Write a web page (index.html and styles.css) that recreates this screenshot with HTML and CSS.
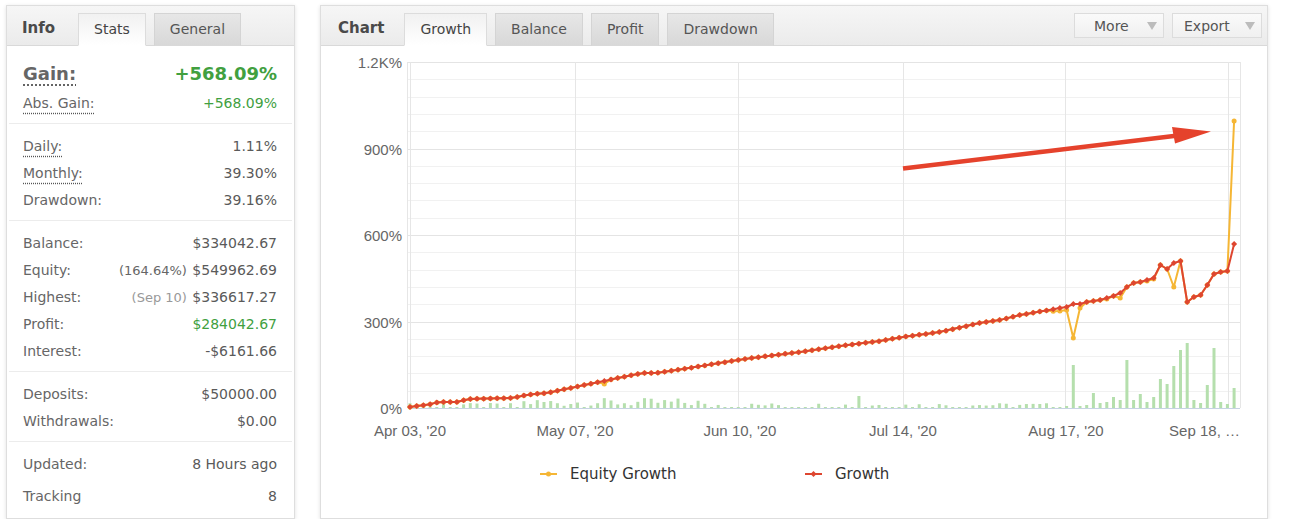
FILE: index.html
```html
<!DOCTYPE html>
<html lang="en">
<head>
    <meta charset="UTF-8">
    <meta name="viewport" content="width=device-width, initial-scale=1.0">
    <title>Account stats</title>
    <link rel="stylesheet" href="styles.css">
</head>
<body>

<div class="page">
    <section class="panel info">
        <div class="panel-head">
            <span class="head-title">Info</span>
            <div class="tabs">
                <span class="tab active">Stats</span>
                <span class="tab">General</span>
            </div>
        </div>

        <div class="stats">
            <div class="group first">
                <div class="row big"><span class="tip">Gain:</span><span class="good">+568.09%</span></div>
                <div class="row"><span class="tip">Abs. Gain:</span><span class="good">+568.09%</span></div>
            </div>
            <div class="group">
                <div class="row"><span class="tip">Daily:</span><span class="value">1.11%</span></div>
                <div class="row"><span class="tip">Monthly:</span><span class="value">39.30%</span></div>
                <div class="row"><span>Drawdown:</span><span class="value">39.16%</span></div>
            </div>
            <div class="group">
                <div class="row"><span>Balance:</span><span class="value">$334042.67</span></div>
                <div class="row"><span>Equity:</span><span class="value"><span class="note">(164.64%)</span> $549962.69</span></div>
                <div class="row"><span>Highest:</span><span class="value"><span class="note light">(Sep 10)</span> $336617.27</span></div>
                <div class="row"><span>Profit:</span><span class="good">$284042.67</span></div>
                <div class="row"><span>Interest:</span><span class="value">-$6161.66</span></div>
            </div>
            <div class="group">
                <div class="row"><span>Deposits:</span><span class="value">$50000.00</span></div>
                <div class="row"><span>Withdrawals:</span><span class="value">$0.00</span></div>
            </div>
            <div class="group last">
                <div class="row"><span>Updated:</span><span class="value">8 Hours ago</span></div>
                <div class="row tracking"><span>Tracking</span><span class="value">8</span></div>
            </div>
        </div>
    </section>

    <section class="panel chart">
        <div class="panel-head">
            <span class="head-title">Chart</span>
            <div class="tabs">
                <span class="tab active">Growth</span>
                <span class="tab">Balance</span>
                <span class="tab">Profit</span>
                <span class="tab">Drawdown</span>
            </div>
            <div class="tools">
                <span class="btn">More <i class="caret"></i></span>
                <span class="btn">Export <i class="caret"></i></span>
            </div>
        </div>

        <svg id="plot" class="plot" width="946" height="400" viewBox="321 46 946 400"></svg>

        <div class="legend">
            <span class="legend-item equity">
                <svg width="17" height="10" viewBox="0 0 17 10"><line x1="0" y1="5" x2="17" y2="5" stroke="#f5b635" stroke-width="2"/><circle cx="8.5" cy="5" r="2.5" fill="#f5b635"/></svg>
                Equity Growth
            </span>
            <span class="legend-item">
                <svg width="17" height="10" viewBox="0 0 17 10"><line x1="0" y1="5" x2="17" y2="5" stroke="#de4630" stroke-width="2"/><path d="M8.5 2 L11.5 5 L8.5 8 L5.5 5 Z" fill="#de4630"/></svg>
                Growth
            </span>
        </div>
    </section>
</div>

<script>
var NS = 'http://www.w3.org/2000/svg';
var svg = document.getElementById('plot');

// plot area in page pixels
var LEFT = 410, RIGHT = 1240, TOP = 62, BASE = 408;
var K = (BASE - TOP) / 1200;
var X0 = 410, DX = 6.7;

function add(tag, attrs) {
    var el = document.createElementNS(NS, tag);
    for (var k in attrs) el.setAttribute(k, attrs[k]);
    svg.appendChild(el);
    return el;
}

function label(x, y, text, anchor) {
    var t = add('text', { x: x, y: y, 'text-anchor': anchor, 'class': 'axis-label' });
    t.textContent = text;
}

// horizontal grid, every 60%
for (var v = 0; v <= 1200; v += 60) {
    var gy = Math.round(BASE - v * K) + 0.5;
    add('line', { x1: 408, x2: RIGHT, y1: gy, y2: gy, stroke: v % 300 === 0 ? '#e4e4e4' : '#f1f1f1', 'stroke-width': 1 });
}

// vertical grid
[407.5, 410.5, 575.5, 738.5, 903.5, 1065.5, 1228.5, 1240.5].forEach(function (gx) {
    add('line', { x1: gx, x2: gx, y1: TOP, y2: BASE, stroke: '#e6e6e6', 'stroke-width': 1 });
});

// y labels
[['0%', 0], ['300%', 300], ['600%', 600], ['900%', 900], ['1.2K%', 1200]].forEach(function (p) {
    label(402, BASE - p[1] * K + 6, p[0], 'end');
});

// x labels
[["Apr 03, '20", 410], ["May 07, '20", 575], ["Jun 10, '20", 740], ["Jul 14, '20", 903], ["Aug 17, '20", 1066]].forEach(function (p) {
    label(p[1], 436, p[0], 'middle');
});
label(1240, 436, 'Sep 18, \u2026', 'end');

// growth curve, traced in page pixels
var anchors = [[410,407],[432,404],[438,402],[459,402],[467,399],[513,398],[521,396],[534,394],[547,393],[575,387],
    [623,377],[642,373],[656,373],[677,370],[744,359],[760,357],[800,352],[840,346],[880,341],[903,337],
    [940,332],[980,323],[1000,320],[1020,315],[1066,307]];

function interp(x) {
    for (var i = 1; i < anchors.length; i++) {
        if (x <= anchors[i][0]) {
            var a = anchors[i - 1], b = anchors[i];
            return a[1] + (b[1] - a[1]) * (x - a[0]) / (b[0] - a[0]);
        }
    }
    return anchors[anchors.length - 1][1];
}

var red = [], yel = [];
for (var i = 0; i < 98; i++) red.push(interp(X0 + i * DX));
yel = red.slice();
yel[29] += 3; yel[96] += 2; yel[97] += 3;

red = red.concat([307,304,304,302,301,300,298,296,293,287,283,282,280,278,265,269,263,261,302,297,295,285,274,272,271,244]);
yel = yel.concat([310,338,308,302,301,300,299,296,298,287,283,282,281,279,265,269,287,261,302,297,295,285,274,272,271,121]);

// daily bars
function rnd(n) {
    var s = Math.sin(n * 12.9898) * 43758.5453;
    return s - Math.floor(s);
}
var bars = [];
for (var i = 0; i < 98; i++) {
    var x = X0 + i * DX, r = rnd(i + 1), h;
    if (x < 520) h = r < 0.5 ? 1 : 2 + r * 3;
    else if (x < 700) h = 1 + r * 9;
    else h = r < 0.35 ? 1 : 1 + r * 4;
    bars.push(h);
}
bars[67] = 12;
bars = bars.concat([2,43,2,3,15,5,6,11,8,48,8,14,6,11,29,24,42,58,65,8,5,23,60,6,4,20]);

bars.forEach(function (h, i) {
    add('rect', { x: X0 + i * DX - 1.5, y: BASE - h, width: 3, height: h, fill: '#b5dfad' });
});

add('line', { x1: 408, x2: RIGHT, y1: BASE + 0.5, y2: BASE + 0.5, stroke: '#c6d3e3', 'stroke-width': 1 });

function series(ys, color, diamond) {
    var pts = ys.map(function (y, i) { return (X0 + i * DX).toFixed(1) + ',' + y.toFixed(1); });
    add('polyline', { points: pts.join(' '), fill: 'none', stroke: color, 'stroke-width': 2, 'stroke-linejoin': 'round' });
    ys.forEach(function (y, i) {
        var x = X0 + i * DX;
        if (diamond) {
            add('path', { d: 'M' + x + ' ' + (y - 3) + ' L' + (x + 3) + ' ' + y + ' L' + x + ' ' + (y + 3) + ' L' + (x - 3) + ' ' + y + ' Z', fill: color });
        } else {
            add('circle', { cx: x, cy: y, r: 2.5, fill: color });
        }
    });
}
series(yel, '#f5b635', false);
series(red, '#de4630', true);

// annotation arrow
add('line', { x1: 903, y1: 168.5, x2: 1178, y2: 135.5, stroke: '#e5422c', 'stroke-width': 4.5 });
add('polygon', { points: '1172,127 1211,131.5 1175,143.5', fill: '#e5422c' });
</script>

</body>
</html>
```

FILE: styles.css
```css
body {
    margin: 0;
    background-color: #fff;
    font-family: "DejaVu Sans", Verdana, sans-serif;
    font-size: 14px;
    color: #666;
}
.page {
    display: flex;
    gap: 25px;
    padding: 5px 0 0 6px;
}
.panel {
    box-sizing: border-box;
    height: 514px;
    background-color: #fff;
    border: 1px solid #dedede;
    box-shadow: 0 1px 4px rgba(0,0,0,0.12);
}
.info {
    width: 289px;
}
.chart {
    width: 948px;
}
.panel-head {
    display: flex;
    align-items: flex-end;
    height: 39px;
    background: linear-gradient(#f6f6f6, #ebebeb);
    border-bottom: 1px solid #d9d9d9;
}
.head-title {
    align-self: center;
    margin: 5px 23px 0 15px;
    font-size: 15px;
    font-weight: bold;
    color: #4a4a4a;
}
.chart .head-title {
    margin-left: 17px;
    margin-right: 20px;
}
.tabs {
    display: flex;
    gap: 8px;
}
.tab {
    box-sizing: border-box;
    height: 33px;
    margin-bottom: -1px;
    padding: 0 15px;
    line-height: 31px;
    font-size: 14px;
    color: #555;
    background: linear-gradient(#e7e7e7, #d8d8d8);
    border: 1px solid #d4d4d4;
    border-bottom-color: #d9d9d9;
}
.tab.active {
    background: linear-gradient(#f1f1f1, #fff);
    border-color: #dcdcdc;
    border-bottom-color: #fff;
    color: #444;
}
.tools {
    display: flex;
    gap: 8px;
    margin-left: auto;
    margin-right: 5px;
    align-self: flex-start;
    margin-top: 7px;
}
.btn {
    box-sizing: border-box;
    display: flex;
    align-items: center;
    justify-content: space-between;
    width: 90px;
    height: 25px;
    padding: 0 6px 0 19px;
    font-size: 14px;
    color: #555;
    background: linear-gradient(#fafafa, #f0f0f0);
    border: 1px solid #dcdcdc;
}
.btn + .btn {
    padding-left: 11px;
}
.caret {
    width: 0;
    height: 0;
    border-left: 5px solid transparent;
    border-right: 5px solid transparent;
    border-top: 8px solid #bcbcbc;
}

/* stats list */
.stats {
    padding: 0 2px;
}
.group {
    padding: 8px 15px 7px 14px;
    border-bottom: 1px solid #ececec;
}
.group.first {
    padding-top: 12px;
}
.group.last {
    border-bottom: none;
}
.row {
    display: flex;
    justify-content: space-between;
    align-items: center;
    height: 27px;
    color: #666;
}
.row.big {
    height: 31px;
    font-size: 18px;
    font-weight: bold;
}
.row.tracking {
    margin-top: 5px;
}
.tip {
    text-decoration: underline dotted #555;
    text-underline-offset: 5px;
}
.value {
    color: #5a5a5a;
}
.good {
    color: #41a03f;
}
.note {
    font-size: 13px;
    color: #666;
    margin-right: 1px;
}
.note.light {
    color: #999;
}

/* chart */
.plot {
    display: block;
}
.axis-label {
    font-family: "Liberation Sans", Arial, sans-serif;
    font-size: 15px;
    fill: #666;
}
.legend {
    display: flex;
    align-items: center;
    height: 22px;
    margin-top: 17px;
    padding-left: 219px;
    font-size: 15px;
    color: #333;
}
.legend-item {
    display: flex;
    align-items: center;
    gap: 13px;
}
.legend-item.equity {
    width: 265px;
}
```
